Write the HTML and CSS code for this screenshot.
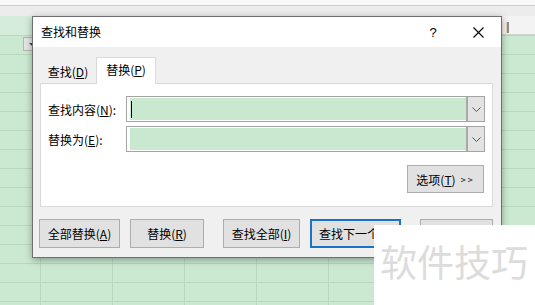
FILE: index.html
```html
<!DOCTYPE html>
<html lang="zh-CN">
<head>
<meta charset="utf-8">
<title>查找和替换</title>
<link rel="stylesheet" href="styles.css">
</head>
<body>
<div class="sheet">
  <div class="topstrip"></div>
  <div class="toolbar"></div>
  <div class="headrow"><div class="headrow-left"></div><div class="headrow-right"></div></div>
  <div class="grid"></div>
</div>
<div class="filter-btn"><span class="filter-arrow"></span></div>
<div class="col-mark"></div>

<div class="dialog">
  <div class="titlebar">
    <span class="title">查找和替换</span>
    <div class="controls">
      <span class="help">?</span>
      <span class="close">
        <svg width="11" height="11" viewBox="0 0 11 11"><path d="M0.5 0.5 L10.5 10.5 M10.5 0.5 L0.5 10.5" stroke="#000" stroke-width="1.1" fill="none"/></svg>
      </span>
    </div>
  </div>
  <div class="dlg-body">
    <div class="tabs">
      <div class="tab">查找(<u>D</u>)</div>
      <div class="tab active">替换(<u>P</u>)</div>
    </div>
    <div class="panel">
      <div class="field">
        <span class="label">查找内容(<u>N</u>):</span>
        <div class="combo">
          <div class="combo-input"><div class="combo-fill"><span class="caret"></span></div></div>
          <div class="combo-btn"><svg width="9" height="5" viewBox="0 0 9 5"><path d="M0.5 0.5 L4.5 4.5 L8.5 0.5" stroke="#555" stroke-width="1" fill="none"/></svg></div>
        </div>
      </div>
      <div class="field second">
        <span class="label">替换为(<u>E</u>):</span>
        <div class="combo">
          <div class="combo-input"><div class="combo-fill"></div></div>
          <div class="combo-btn"><svg width="9" height="5" viewBox="0 0 9 5"><path d="M0.5 0.5 L4.5 4.5 L8.5 0.5" stroke="#555" stroke-width="1" fill="none"/></svg></div>
        </div>
      </div>
      <div class="options-row">
        <div class="btn options">选项(<u>T</u>) <span class="arrows">&gt;&gt;</span></div>
      </div>
    </div>
    <div class="actions">
      <div class="btn b-all">全部替换(<u>A</u>)</div>
      <div class="btn b-rep">替换(<u>R</u>)</div>
      <div class="btn b-findall wide-gap">查找全部(<u>I</u>)</div>
      <div class="btn b-next focused">查找下一个(<u>F</u>)</div>
      <div class="btn b-close wide-gap"></div>
    </div>
  </div>
</div>

<div class="watermark">软件技巧</div>
</body>
</html>
```

FILE: styles.css
```css
html, body {
  margin: 0;
  padding: 0;
}
body {
  width: 535px;
  height: 305px;
  overflow: hidden;
  position: relative;
  font-family: "Noto Sans CJK SC", "Noto Sans", sans-serif;
}

/* spreadsheet backdrop */
.sheet {
  width: 535px;
  height: 305px;
  display: flex;
  flex-direction: column;
}
.topstrip {
  height: 5px;
  background: #f8f8f8;
  border-bottom: 1px solid #cfcfcf;
}
.toolbar {
  height: 10px;
  background: #ececec;
}
.headrow {
  height: 19px;
  display: flex;
}
.headrow-left {
  flex: 1;
  background: #d6ecda;
}
.headrow-right {
  width: 40px;
  background: #f3f3f3;
  border-bottom: 1px solid #c9d9cc;
  box-sizing: border-box;
}
.grid {
  flex: 1;
  background-color: #cbe9d1;
  background-image:
    linear-gradient(to bottom, #b6d8bc 1px, transparent 1px),
    linear-gradient(to right, #b6d8bc 1px, transparent 1px);
  background-size: 72px 19px, 72px 19px;
  background-position: 0 0, 40px 0;
}
.filter-btn {
  position: absolute;
  left: 23px;
  top: 37px;
  width: 12px;
  height: 14px;
  box-sizing: border-box;
  background: #e4e4e4;
  border: 1px solid #b4b4b4;
}
.filter-arrow {
  position: absolute;
  left: 5px;
  top: 5px;
  border-left: 3px solid transparent;
  border-right: 3px solid transparent;
  border-top: 3px solid #444;
}
.col-mark {
  position: absolute;
  left: 506px;
  top: 22px;
  width: 3px;
  height: 11px;
  background: linear-gradient(to right, #f0d2b4 1px, #8f8f8f 1px);
}

/* dialog */
.dialog {
  position: absolute;
  left: 32px;
  top: 16px;
  width: 470px;
  height: 242px;
  box-sizing: border-box;
  border: 1px solid #6f6f6f;
  background: #f0f0f0;
  box-shadow: 0 2px 7px rgba(0, 0, 0, 0.35);
  display: flex;
  flex-direction: column;
  font-size: 12px;
  color: #000;
}
.titlebar {
  height: 30px;
  flex: none;
  background: #fff;
  display: flex;
  align-items: center;
  justify-content: space-between;
  padding-left: 8px;
}
.title {
  font-size: 12px;
  line-height: 14px;
}
.controls {
  display: flex;
  align-items: center;
  height: 30px;
}
.help {
  width: 30px;
  text-align: center;
  font-size: 13px;
  font-family: "Liberation Sans", sans-serif;
  margin-right: 7px;
}
.close {
  width: 46px;
  height: 30px;
  display: flex;
  align-items: center;
  justify-content: center;
}
.dlg-body {
  flex: 1;
  padding: 10px 8px 0 7px;
  display: flex;
  flex-direction: column;
}
u {
  text-decoration: underline;
  text-underline-offset: 1px;
}

/* tabs */
.tabs {
  display: flex;
  align-items: flex-end;
  height: 26px;
}
.tab {
  width: 56px;
  height: 22px;
  display: flex;
  align-items: center;
  justify-content: center;
  font-size: 12px;
  padding-bottom: 1px;
  box-sizing: border-box;
}
.tab.active {
  width: 60px;
  height: 27px;
  margin-bottom: -1px;
  background: #fff;
  border: 1px solid #d9d9d9;
  border-bottom: none;
  padding-bottom: 3px;
  position: relative;
  z-index: 1;
}

/* panel */
.panel {
  height: 124px;
  box-sizing: border-box;
  background: #fff;
  border: 1px solid #d9d9d9;
  padding: 12px 7px 13px 7px;
  display: flex;
  flex-direction: column;
}
.field {
  display: flex;
  align-items: center;
  height: 26px;
}
.field.second {
  margin-top: 4px;
}
.label {
  width: 78px;
  flex: none;
  font-size: 12px;
}
.combo {
  width: 359px;
  height: 26px;
  box-sizing: border-box;
  display: flex;
  border: 1px solid #a4a4a4;
}
.combo-input {
  flex: 1;
  background: #fff;
  padding: 1px 0 1px 3px;
  display: flex;
}
.combo-fill {
  flex: 1;
  background: #c8e9cf;
  display: flex;
  align-items: center;
}
.caret {
  width: 1px;
  height: 17px;
  background: #000;
  margin-left: 1px;
}
.combo-btn {
  width: 16px;
  flex: none;
  background: #e3e3e3;
  border-left: 2px solid #a8a8a8;
  display: flex;
  align-items: center;
  justify-content: center;
}
.options-row {
  display: flex;
  justify-content: flex-end;
  margin-top: 13px;
  padding-right: 1px;
}

/* buttons */
.btn {
  height: 29px;
  box-sizing: border-box;
  background: #e1e1e1;
  border: 1px solid #adadad;
  display: flex;
  align-items: center;
  justify-content: center;
  font-size: 12px;
  white-space: nowrap;
}
.options {
  width: 77px;
  height: 28px;
}
.arrows {
  font-size: 9px;
  letter-spacing: 2px;
  margin-left: 5px;
}
.actions {
  display: flex;
  margin-top: 12px;
  margin-left: -1px;
  gap: 10px;
}
.actions .wide-gap {
  margin-left: 9px;
}
.b-all { width: 81px; }
.b-rep { width: 74px; }
.b-findall { width: 77px; }
.b-next {
  width: 91px;
  justify-content: flex-start;
  padding-left: 7px;
}
.b-close { width: 73px; }
.focused {
  border: 2px solid #1a73c8;
}

/* watermark overlay */
.watermark {
  position: absolute;
  left: 374px;
  top: 225px;
  width: 161px;
  height: 80px;
  box-sizing: border-box;
  background: #fff;
  padding: 18px 0 0 6px;
  font-family: "Noto Sans CJK SC", sans-serif;
  font-size: 37px;
  line-height: 37px;
  color: #dcdcdc;
  white-space: nowrap;
}
```
